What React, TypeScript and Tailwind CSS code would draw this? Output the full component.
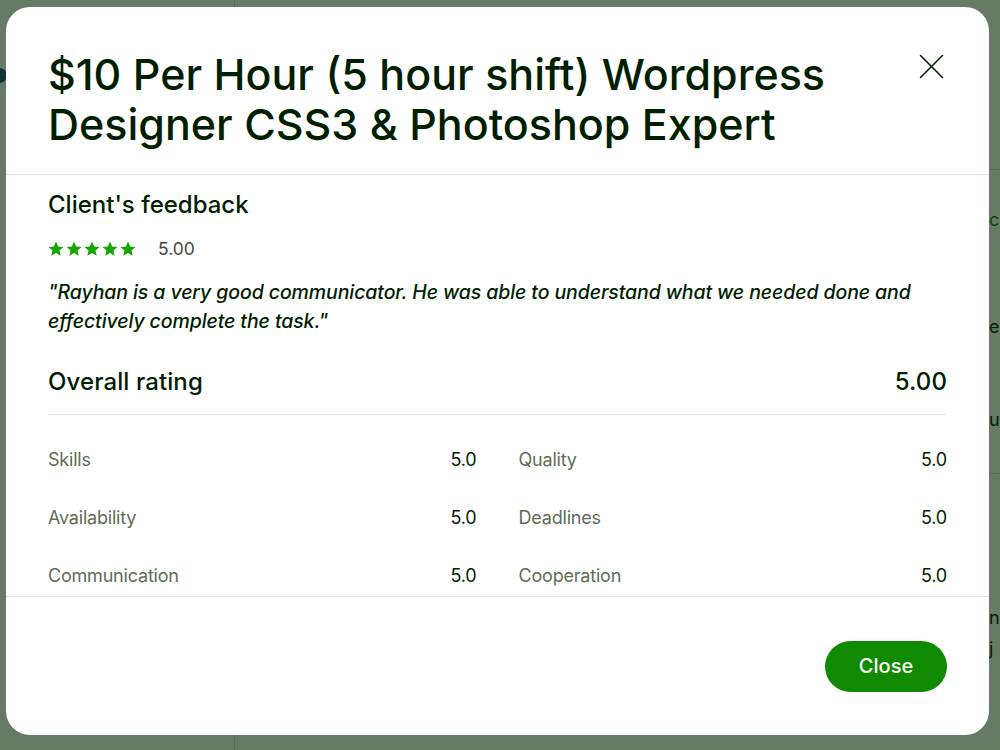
const ratings = [
  { label: "Skills", value: "5.0" },
  { label: "Quality", value: "5.0" },
  { label: "Availability", value: "5.0" },
  { label: "Deadlines", value: "5.0" },
  { label: "Communication", value: "5.0" },
  { label: "Cooperation", value: "5.0" },
];

function Star() {
  return (
    <svg width="16" height="16" viewBox="0 0 16 16" fill="#14a800">
      <path d="M8 .6l2.2 4.9 5.3.5-4 3.6 1.2 5.2L8 12.1l-4.7 2.7 1.2-5.2-4-3.6 5.3-.5z" />
    </svg>
  );
}

function Stars() {
  return (
    <div className="flex gap-[2px]">
      {[0, 1, 2, 3, 4].map((i) => (
        <Star key={i} />
      ))}
    </div>
  );
}

// page sitting behind the dialog backdrop
function Page() {
  return (
    <div className="flex min-h-screen bg-white text-[#001e00]">
      <aside className="w-[235px] shrink-0 border-r border-[#d5e0d5] pt-[68px]">
        <div className="-ml-[8px] h-[15px] w-[15px] rounded-full bg-[#1d4e89]" />
      </aside>
      <main className="flex-1 overflow-hidden">
        <div className="h-[170px] border-b border-[#d5e0d5]" />
        <div className="ml-[754px] flex flex-col whitespace-nowrap text-[18px]">
          <span className="mt-[36px] text-[#108a00]">c</span>
          <span className="mt-[80px]">e</span>
          <span className="mt-[66px]">u</span>
          <div className="mt-[40px] border-b border-[#d5e0d5]" />
          <span className="mt-[130px]">n</span>
          <span className="mt-[4px]">j</span>
        </div>
      </main>
    </div>
  );
}

function FeedbackModal() {
  return (
    <div className="flex h-[728px] w-[983px] flex-col overflow-hidden rounded-[24px] bg-white text-[#001e00]">
      <header className="flex items-start justify-between border-b border-[#e0e6e0] px-[42px] pt-[42px] pb-[25px]">
        <h2 className="max-w-[840px] text-[43px] font-medium leading-[50px] tracking-[0px]">
          $10 Per Hour (5 hour shift) Wordpress Designer CSS3 &amp; Photoshop Expert
        </h2>
        <button className="mt-[5px] mr-[3px] text-[#001e00]" aria-label="Close">
          <svg width="25" height="25" viewBox="0 0 25 25" fill="none" stroke="currentColor" strokeWidth="1.6" strokeLinecap="round">
            <path d="M1.5 1.5l22 22M23.5 1.5l-22 22" />
          </svg>
        </button>
      </header>

      <section className="h-[422px] overflow-hidden border-b border-[#e0e6e0] px-[42px] pt-[14px]">
        <h3 className="text-[24px] font-medium leading-[32px]">Client's feedback</h3>
        <div className="mt-[16px] flex items-center gap-[22px]">
          <Stars />
          <span className="text-[17.5px] leading-[24px] text-[#3d4b3d]">5.00</span>
        </div>
        <p className="mt-[17px] text-[19.5px] font-medium italic leading-[29px] tracking-[-0.1px]">
          "Rayhan is a very good communicator. He was able to understand what we needed done and effectively complete the task."
        </p>

        <div className="mt-[30px] flex items-center justify-between border-b border-[#e0e6e0] pb-[16px] text-[24px] font-medium leading-[32px] tracking-[0.1px]">
          <span>Overall rating</span>
          <span>5.00</span>
        </div>

        <div className="grid grid-cols-2 gap-x-[42px] gap-y-[34px] pt-[33px] text-[18px] leading-[24px] tracking-[-0.2px]">
          {ratings.map((r) => (
            <div key={r.label} className="flex justify-between">
              <span className="text-[#5e6d55]">{r.label}</span>
              <span>{r.value}</span>
            </div>
          ))}
        </div>
      </section>

      <footer className="flex flex-1 items-center justify-end px-[42px]">
        <button className="h-[51px] w-[122px] rounded-full bg-[#108a00] text-[20px] font-medium text-white">
          Close
        </button>
      </footer>
    </div>
  );
}

export default function App() {
  return (
    <div className="relative h-[750px] w-[1000px] overflow-hidden" style={{ fontFamily: "Inter, sans-serif" }}>
      <Page />
      <div className="absolute inset-0 bg-[#002100]/60 pl-[6px] pt-[7px]">
        <FeedbackModal />
      </div>
    </div>
  );
}
